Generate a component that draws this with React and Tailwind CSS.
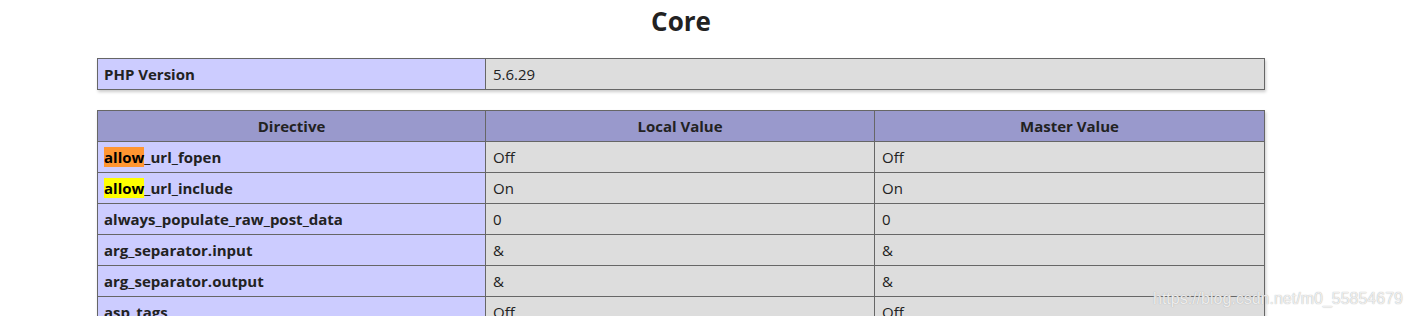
import React from 'react';

const rows = [
  { name: 'allow_url_fopen', hl: 'bg-[#ff9632]', local: 'Off', master: 'Off' },
  { name: 'allow_url_include', hl: 'bg-[#ffff00]', local: 'On', master: 'On' },
  { name: 'always_populate_raw_post_data', local: '0', master: '0' },
  { name: 'arg_separator.input', local: '&', master: '&' },
  { name: 'arg_separator.output', local: '&', master: '&' },
  { name: 'asp_tags', local: 'Off', master: 'Off' },
];

const tdE = 'border border-[#666] bg-[#ccccff] font-bold px-[6px] h-[31px] text-left align-middle';
const tdV = 'border border-[#666] bg-[#dddddd] px-[7px] h-[31px] text-left align-middle';

const App = () => {
  return (
    <section className="relative w-full h-[316px] overflow-hidden bg-white text-[#222] font-['Open_Sans','Noto_Sans',sans-serif] text-[15px]">
      <div className="pl-[97px] w-[1265px]">
        <h2 className="text-center text-[26px] font-bold leading-none pt-[8px] h-[58px]">Core</h2>

        {/* PHP Version */}
        <table className="w-[1168px] border-collapse table-fixed shadow-[1px_2px_3px_#ccc]">
          <tbody>
            <tr>
              <td className={tdE + ' w-[388px] pt-[1px]'}>PHP Version</td>
              <td className={tdV + ' pt-[1px]'}>5.6.29</td>
            </tr>
          </tbody>
        </table>

        {/* Directives */}
        <table className="mt-[20px] w-[1168px] border-collapse table-fixed shadow-[1px_2px_3px_#ccc]">
          <thead>
            <tr className="bg-[#9999cc]">
              <th className="border border-[#666] h-[31px] pt-[1px] font-bold w-[388px]">Directive</th>
              <th className="border border-[#666] h-[31px] pt-[1px] font-bold w-[389px]">Local Value</th>
              <th className="border border-[#666] h-[31px] pt-[1px] font-bold">Master Value</th>
            </tr>
          </thead>
          <tbody>
            {rows.map((r) => (
              <tr key={r.name}>
                <td className={tdE + ' pt-[1px]'}>
                  {r.hl ? (
                    <>
                      <span className={r.hl + ' text-black'}>allow</span>
                      {r.name.slice(5)}
                    </>
                  ) : (
                    r.name
                  )}
                </td>
                <td className={tdV + ' pt-[1px]'}>{r.local}</td>
                <td className={tdV + ' pt-[1px]'}>{r.master}</td>
              </tr>
            ))}
          </tbody>
        </table>
      </div>

      {/* watermark */}
      <div className="absolute left-[1153px] top-[287px] text-[16px] text-white/80 font-['Liberation_Sans',sans-serif] [text-shadow:0_0_1px_#999]">
        https://blog.csdn.net/m0_55854679
      </div>
    </section>
  );
};

export default App;
